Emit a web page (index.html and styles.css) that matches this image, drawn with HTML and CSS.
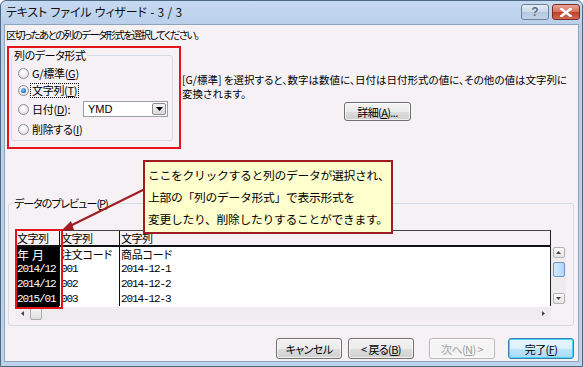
FILE: index.html
```html
<!DOCTYPE html>
<html lang="ja">
<head>
<meta charset="utf-8">
<title>テキスト ファイル ウィザード - 3 / 3</title>
<link rel="stylesheet" href="styles.css">
</head>
<body>
<div class="window">
  <div class="titlebar">
    <span class="title">テキスト ファイル ウィザード - 3 / 3</span>
    <div class="tb-buttons">
      <div class="tb-btn help">?</div>
      <div class="tb-btn close">
        <svg width="12" height="9" viewBox="0 0 12 9"><path d="M1.5 1 L10.5 8 M10.5 1 L1.5 8" stroke="#fff" stroke-width="2.6" stroke-linecap="square"/></svg>
      </div>
    </div>
  </div>
  <div class="client">
    <div class="instr">区切ったあとの列のデータ形式を選択してください。</div>
    <div class="top">
      <div class="hl-box">
        <fieldset class="group fmt">
          <legend>列のデータ形式</legend>
          <div class="radio-row r1"><span class="radio"></span><span class="rlabel">G/標準(<u>G</u>)</span></div>
          <div class="radio-row r2"><span class="radio checked"></span><span class="rlabel focus">文字列(<u>T</u>)</span></div>
          <div class="radio-row r3"><span class="radio"></span><span class="rlabel datelabel">日付(<u>D</u>):</span>
            <div class="select"><span class="sel-text">YMD</span><span class="sel-btn"><svg width="7" height="4" viewBox="0 0 7 4"><path d="M0 0 H7 L3.5 4 Z" fill="#000"/></svg></span></div>
          </div>
          <div class="radio-row r4"><span class="radio"></span><span class="rlabel">削除する(<u>I</u>)</span></div>
        </fieldset>
      </div>
      <div class="desc-col">
        <p class="desc">[G/標準] を選択すると、数字は数値に、日付は日付形式の値に、その他の値は文字列に</p>
        <p class="desc second">変換されます。</p>
        <div class="btn detail">詳細(<u>A</u>)...</div>
      </div>
    </div>
    <fieldset class="group preview">
      <legend>データのプレビュー(<u>P</u>)</legend>
      <div class="grid-wrap">
        <div class="grid">
          <div class="col c1">
            <div class="hcell">文字列</div>
            <div class="dcell sel">
              <div class="cell wide ym">年月</div>
              <div class="cell mono">2014/12</div>
              <div class="cell mono">2014/12</div>
              <div class="cell mono">2015/01</div>
            </div>
          </div>
          <div class="col c2">
            <div class="hcell">文字列</div>
            <div class="dcell">
              <div class="cell wide">注文コード</div>
              <div class="cell mono">001</div>
              <div class="cell mono">002</div>
              <div class="cell mono">003</div>
            </div>
          </div>
          <div class="col c3">
            <div class="hcell">文字列</div>
            <div class="dcell">
              <div class="cell wide">商品コード</div>
              <div class="cell mono">2014-12-1</div>
              <div class="cell mono">2014-12-2</div>
              <div class="cell mono">2014-12-3</div>
            </div>
          </div>
        </div>
        <div class="vscroll">
          <div class="sb-btn"><svg width="5" height="3" viewBox="0 0 5 3"><path d="M0 3 L2.5 0 L5 3 Z" fill="#444"/></svg></div>
          <div class="vthumb"></div>
          <div class="vtrack"></div>
          <div class="sb-btn"><svg width="5" height="3" viewBox="0 0 5 3"><path d="M0 0 L2.5 3 L5 0 Z" fill="#444"/></svg></div>
        </div>
      </div>
      <div class="hscroll">
        <span class="harrow"><svg width="3" height="5" viewBox="0 0 3 5"><path d="M3 0 L0 2.5 L3 5 Z" fill="#444"/></svg></span>
        <div class="hthumb"></div>
        <div class="htrack"></div>
        <span class="harrow"><svg width="3" height="5" viewBox="0 0 3 5"><path d="M0 0 L3 2.5 L0 5 Z" fill="#444"/></svg></span>
      </div>
    </fieldset>
    <div class="buttons">
      <div class="btn">キャンセル</div>
      <div class="btn back">&lt; 戻る(<u>B</u>)</div>
      <div class="btn disabled">次へ(<u>N</u>) &gt;</div>
      <div class="btn default">完了(<u>F</u>)</div>
    </div>

    <div class="col-hl"></div>
    <svg class="arrow" width="100" height="60" viewBox="0 0 100 60">
      <line x1="94" y1="2" x2="13" y2="42" stroke="#a01d22" stroke-width="2"/>
      <path d="M6 46 L16 36 L19 45 Z" fill="#a01d22"/>
    </svg>
    <div class="callout">
      <p>ここをクリックすると列のデータが選択され、</p>
      <p>上部の「列のデータ形式」で表示形式を</p>
      <p>変更したり、削除したりすることができます。</p>
    </div>
  </div>
</div>
</body>
</html>
```

FILE: styles.css
```css
* { box-sizing: border-box; margin: 0; padding: 0; }
html, body { width: 583px; height: 367px; overflow: hidden; }
body {
  background: #ffffff;
  font-family: "Noto Sans CJK JP", "Liberation Sans", sans-serif;
  font-size: 11px;
  color: #000;
  font-feature-settings: "palt";
}
u { text-decoration: underline; text-underline-offset: 1px; }

.window {
  width: 583px;
  height: 367px;
  border: 1px solid #4f6985;
  border-radius: 6px 6px 0 0;
  background: linear-gradient(#c6daf1, #b9cfe9 24px, #bdd2eb);
  display: flex;
  flex-direction: column;
  padding: 0 3px 4px 3px;
}
.titlebar {
  height: 23px;
  display: flex;
  align-items: flex-start;
  justify-content: space-between;
}
.title {
  margin-top: 3px;
  padding-left: 2px;
  font-size: 12px;
  line-height: 16px;
  color: #111;
  letter-spacing: -0.2px;
  word-spacing: 1px;
}
.tb-buttons { display: flex; gap: 3px; margin-top: 3px; margin-right: -1px; }
.tb-btn {
  width: 28px;
  height: 16px;
  border-radius: 3px;
  display: flex;
  align-items: center;
  justify-content: center;
}
.help {
  border: 1px solid #6c819c;
  background: linear-gradient(#e4ecf6, #c9d8ea 50%, #b5c8df 51%, #c2d3e8);
  color: #5a6a80;
  font-family: "Liberation Sans", sans-serif;
  font-weight: bold;
  font-size: 12px;
  text-shadow: 0 0 1px #fff;
}
.close {
  border: 1px solid #7a2c24;
  background: linear-gradient(#e9a596, #d4705d 50%, #c0402a 51%, #cf6a52);
}

.client {
  flex: 1;
  position: relative;
  background: #f5f1f5;
  border: 1px solid #8ea3bd;
  padding: 0;
}
.instr {
  margin: 2px 0 0 1px;
  height: 16px;
  line-height: 16px;
  font-size: 10.5px;
  letter-spacing: -1.6px;
}
.top {
  display: flex;
  margin-top: 3px;
}
.hl-box {
  margin-left: 2px;
  width: 174px;
  height: 103px;
  border: 2px solid #e8141b;
}
.group {
  border: 1px solid #d3dbe3;
  border-radius: 3px;
  min-width: 0;
}
.group legend {
  height: 14px;
  line-height: 14px;
  font-size: 11px;
  padding: 0 1px;
  letter-spacing: -0.4px;
}
.fmt {
  margin-left: 2px;
  width: 162px;
  height: 93px;
  padding: 3px 0 0 6px;
}
.fmt legend { margin-left: -5px; }
.radio-row { display: flex; align-items: center; height: 16px; }
.radio-row.r2 { height: 18px; }
.radio-row.r3 { height: 20px; }
.radio-row.r4 { height: 21px; }
.radio {
  width: 11px;
  height: 11px;
  border-radius: 50%;
  border: 1px solid #8f9195;
  background: radial-gradient(circle at 50% 40%, #ffffff 20%, #dcdcdc 80%);
  flex: none;
  position: relative;
}
.radio.checked::after {
  content: "";
  position: absolute;
  left: 2px; top: 2px;
  width: 5px; height: 5px;
  border-radius: 50%;
  background: radial-gradient(circle at 40% 35%, #8fd0ff, #1b62b5 70%);
}
.rlabel {
  margin-left: 3px;
  line-height: 13px;
  font-size: 11px;
  letter-spacing: -0.3px;
}
.rlabel.focus {
  outline: 1px dotted #000;
  outline-offset: 0;
  padding: 0 1px;
  margin-left: 2px;
}
.datelabel { width: 51px; }
.select {
  width: 85px;
  height: 16px;
  border: 1px solid #9b9fa5;
  background: #fff;
  display: flex;
  align-items: center;
  justify-content: space-between;
  padding: 0 1px 0 4px;
}
.sel-text { font-family: "Liberation Sans", sans-serif; font-size: 11px; }
.sel-btn {
  width: 14px;
  height: 12px;
  border: 1px solid #8d8d8d;
  border-radius: 2px;
  background: linear-gradient(#f4f4f4, #d8d8d8);
  display: flex;
  align-items: center;
  justify-content: center;
}
.desc-col { display: flex; flex-direction: column; margin-left: 1px; }
.desc {
  margin-top: 27px;
  height: 14px;
  line-height: 14px;
  font-size: 10.5px;
  letter-spacing: 0px;
  white-space: nowrap;
}
.desc.second { margin-top: 0; }
.btn {
  width: 66px;
  height: 20px;
  border: 1px solid #707070;
  border-radius: 3px;
  background: linear-gradient(#f3f3f3, #ebebeb 50%, #dddddd 51%, #cfcfcf);
  display: flex;
  align-items: center;
  justify-content: center;
  font-size: 11px;
  letter-spacing: -0.6px;
  box-shadow: inset 0 0 0 1px rgba(255,255,255,0.7);
}
.detail { margin-top: 1px; margin-left: 162px; width: 67px; height: 19px; }

.preview {
  margin: 47px 0 0 3px;
  width: 566px;
  height: 130px;
  padding: 20px 0 0 7px;
}
.preview legend { margin-left: -3px; letter-spacing: -1px; }
.grid-wrap { display: flex; }
.grid {
  display: flex;
  width: 535px;
  height: 76px;
  border-top: 1px solid #444;
  border-right: 1px solid #222;
}
.col { display: flex; flex-direction: column; border-right: 1px solid #111; }
.c1 { width: 44px; }
.c2 { width: 60px; }
.c3 { flex: 1; border-right: none; }
.hcell {
  height: 16px;
  line-height: 15px;
  padding-left: 1px;
  font-size: 11px;
  border-bottom: 2px solid #111;
  letter-spacing: -0.5px;
}
.dcell { flex: 1; background: #fff; padding-top: 0; }
.dcell.sel { background: #000; color: #fff; }
.cell { height: 15px; line-height: 15px; padding-left: 1px; white-space: nowrap; }
.cell.wide { font-size: 11px; letter-spacing: -0.2px; }
.cell.ym { font-size: 12px; letter-spacing: 3px; }
.cell.mono { font-family: "Liberation Mono", monospace; font-size: 11px; letter-spacing: -1.1px; }

.vscroll {
  width: 15px;
  margin-top: 17px;
  height: 57px;
  display: flex;
  flex-direction: column;
  align-items: center;
  padding: 0 1px;
  background: #eeecef;
}
.sb-btn {
  width: 12px;
  height: 11px;
  border: 1px solid #b3b3b3;
  border-radius: 2px;
  background: linear-gradient(#fafafa, #e3e3e3);
  display: flex;
  align-items: center;
  justify-content: center;
  flex: none;
}
.vthumb {
  margin-top: 4px;
  width: 12px;
  height: 15px;
  border: 1px solid #6e98c4;
  border-radius: 2px;
  background: linear-gradient(90deg, #d5e9fb, #b2d5f5);
  flex: none;
}
.vtrack { flex: 1; }
.hscroll {
  width: 535px;
  height: 14px;
  display: flex;
  align-items: center;
  background: #eeecef;
  padding: 0 5px 0 5px;
}
.harrow { display: flex; width: 4px; }
.hthumb {
  margin-left: 5px;
  width: 12px;
  height: 13px;
  border: 1px solid #a9a9a9;
  border-radius: 2px;
  background: linear-gradient(#f6f6f6, #dedede);
}
.htrack { flex: 1; }

.buttons {
  display: flex;
  justify-content: flex-end;
  margin: 12px 4px 0 0;
}
.buttons .btn { width: 66px; height: 21px; }
.buttons .back { margin-left: 6px; }
.buttons .disabled {
  margin-left: 15px;
  color: #a0a0a0;
  border-color: #b7b7b7;
  background: #f4f4f4;
}
.buttons .default {
  margin-left: 13px;
  border-color: #3c7fb1;
  box-shadow: inset 0 0 0 1px #48d5fb;
  background: linear-gradient(#eaf6fd, #d9f0fc 50%, #bee6fd 51%, #a7d9f5);
}

.col-hl {
  position: absolute;
  left: 10px;
  top: 204px;
  width: 48px;
  height: 80px;
  border: 2px solid #e8141b;
}
.arrow {
  position: absolute;
  left: 50px;
  top: 160px;
}
.callout {
  position: absolute;
  left: 138px;
  top: 135px;
  width: 250px;
  height: 74px;
  border: 2px solid #9e1c22;
  background: #ffffce;
  padding: 2px 0 0 3px;
}
.callout p {
  font-size: 11.8px;
  line-height: 22px;
  letter-spacing: -0.3px;
  white-space: nowrap;
  font-feature-settings: normal;
}
```
